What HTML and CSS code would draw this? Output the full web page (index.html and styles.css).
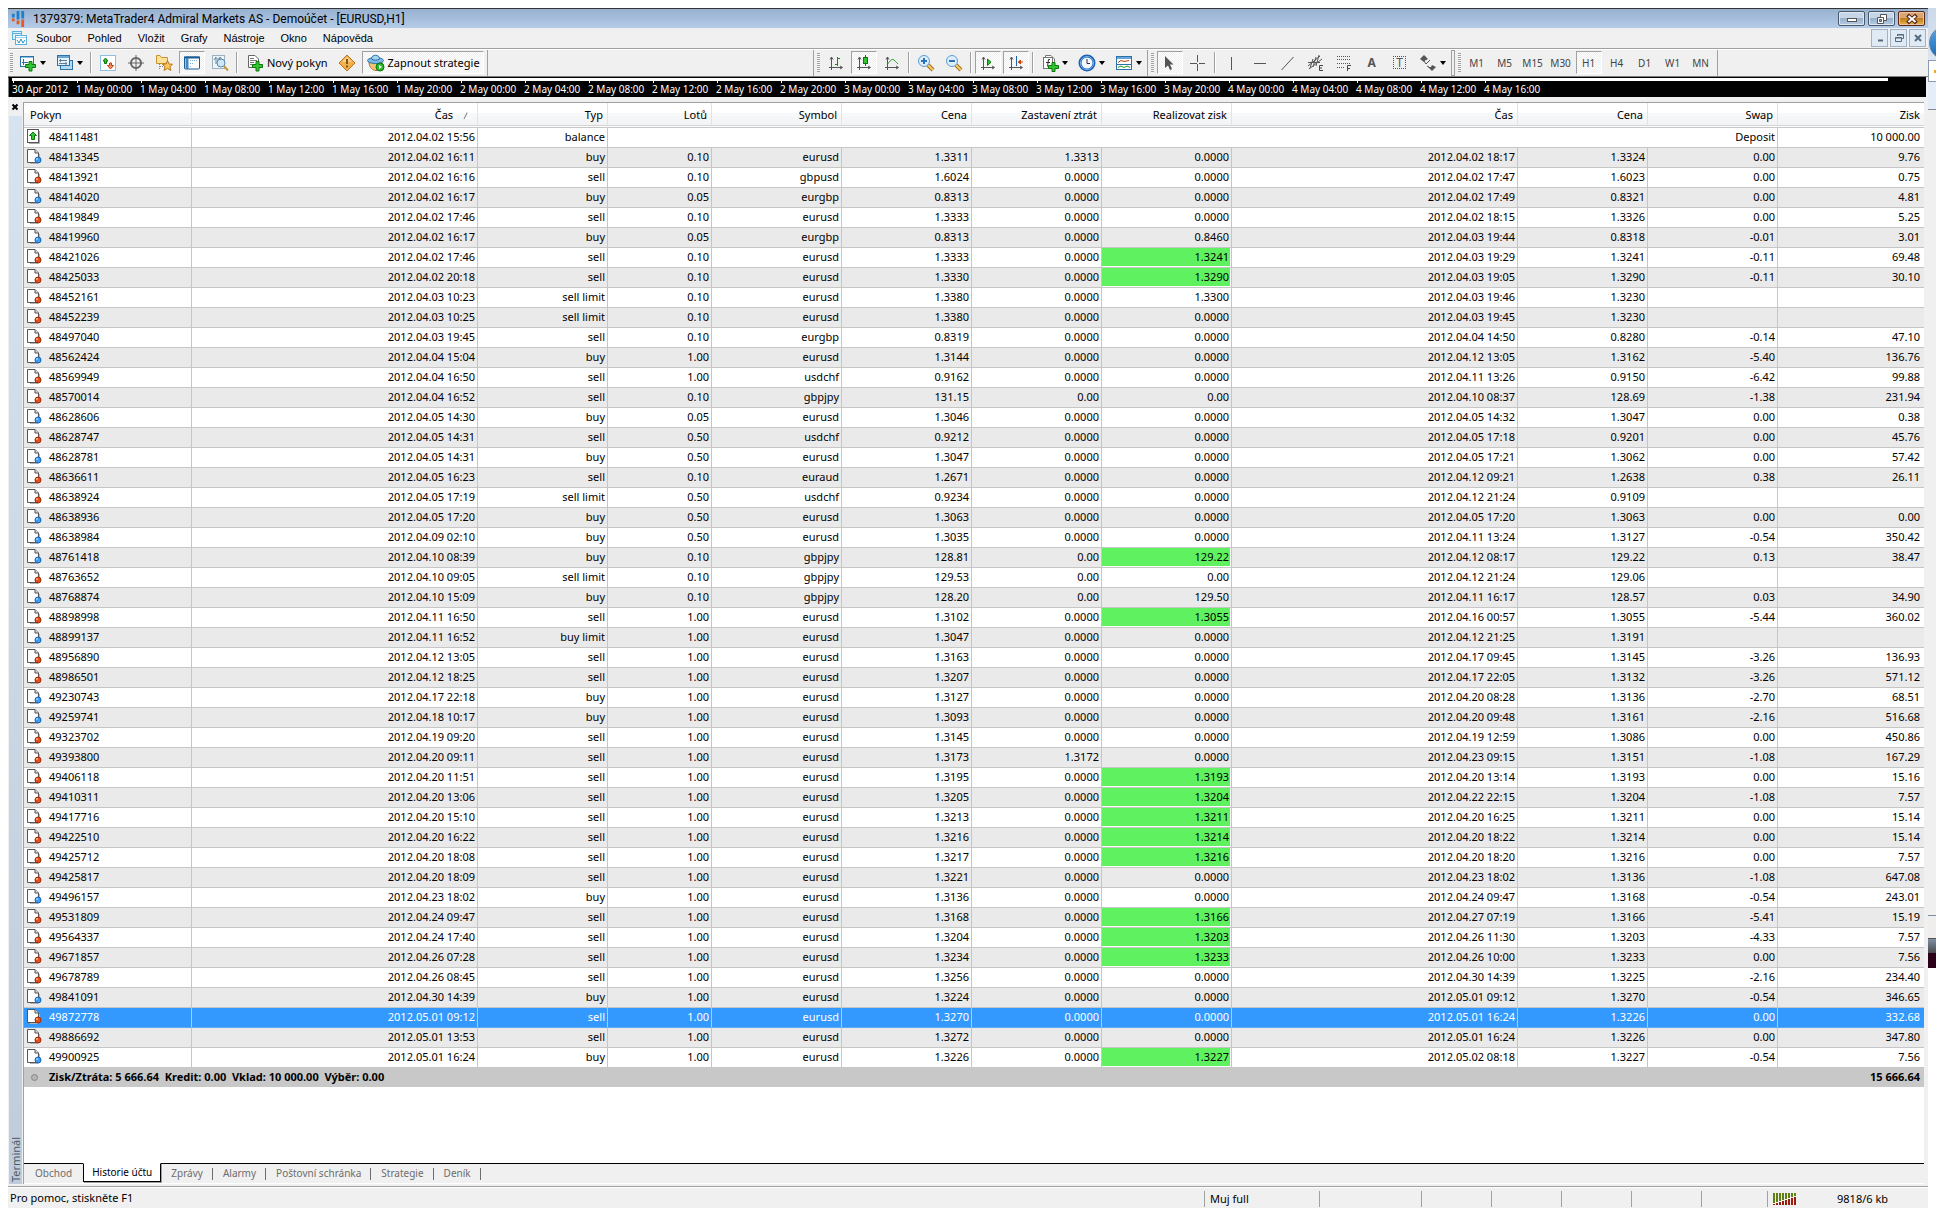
FILE: index.html
```html
<!DOCTYPE html>
<html lang="cs">
<head>
  <meta charset="UTF-8">
  <meta name="viewport" content="width=device-width, initial-scale=1.0">
  <title>1379379: MetaTrader4 Admiral Markets AS - Demoúčet - [EURUSD,H1]</title>
  <link rel="stylesheet" href="styles.css">
</head>
<body>

<!-- Order icons used by the history rows -->
<svg class="defs" width="0" height="0" aria-hidden="true">
  <symbol id="doc" viewBox="0 0 15 15">
    <path d="M12.500 5V13M3 14.500H11" stroke="#b4b4b4" fill="none"/>
    <path d="M.5 .5H8L11.500 4V13.500H.5Z" fill="#fff" stroke="#555"/>
    <path d="M8 .5V4H11.500" fill="#ddd" stroke="#555"/>
  </symbol>
  <symbol id="buy" viewBox="0 0 15 15">
    <use href="#doc"/>
    <circle cx="11" cy="11" r="3" fill="#3f9bf2" stroke="#1764ad"/>
    <circle cx="10" cy="10" r="1" fill="#a5d4ff"/>
  </symbol>
  <symbol id="sell" viewBox="0 0 15 15">
    <use href="#doc"/>
    <circle cx="11" cy="11" r="3" fill="#e2501c" stroke="#9c2c06"/>
    <circle cx="10" cy="10" r="1" fill="#ffb294"/>
  </symbol>
  <symbol id="balance" viewBox="0 0 15 15">
    <path d="M12.500 2V14.500H2" stroke="#aaa" fill="none"/>
    <rect x=".5" y=".5" width="11" height="13" fill="#fff" stroke="#555"/>
    <path d="M6 3L9.500 6.500H7.500V10.500H4.500V6.500H2.500Z" fill="#35c435" stroke="#0b7a0b"/>
  </symbol>
  <symbol id="axes" viewBox="0 0 16 16">
    <path d="M3.500 2V15M1 12.500H14M2 4.500L3.500 2L5 4.500M12 11L14.500 12.500L12 14" stroke="#555" fill="none"/>
  </symbol>
</svg>

<div class="screen">
  <div class="window">

    <header class="titlebar">
      <svg class="logo" viewBox="0 0 14 18">
        <path d="M2 4V8M7 1V10M12 1V9" stroke="#1f7fc9" stroke-width="3"/>
        <path d="M2 9V12M7 11V15M12 10V18" stroke="#e2592b" stroke-width="3"/>
      </svg>
      <h1>1379379: MetaTrader4 Admiral Markets AS - Demoúčet - [EURUSD,H1]</h1>
      <div class="caption-buttons">
        <button type="button" class="caption" aria-label="Minimalizovat"><svg viewBox="0 0 12 12"><rect x="1.500" y="5.500" width="9" height="3" fill="#fff" stroke="#555"/></svg></button>
        <button type="button" class="caption" aria-label="Obnovit"><svg viewBox="0 0 12 12"><path d="M4.500 1.500H10.500V7.500H4.500Z" fill="#fff" stroke="#555"/><path d="M1.500 4.500H7.500V10.500H1.500Z" fill="#fff" stroke="#555"/><path d="M3.500 6.500H5.500V8.500H3.500Z" fill="#98b1cb" stroke="#555"/></svg></button>
        <button type="button" class="caption caption-close" aria-label="Zavřít"><svg viewBox="0 0 12 12"><path d="M1.500 2L10.500 10M10.500 2L1.500 10" stroke="#5a2a1a" stroke-width="4"/><path d="M2.500 3L9.500 9M9.500 3L2.500 9" stroke="#fff" stroke-width="2"/></svg></button>
      </div>
    </header>

    <nav class="menubar">
      <svg class="menu-icon" viewBox="0 0 15 15">
        <rect x=".5" y=".5" width="9" height="8" fill="#dff1fb" stroke="#5cb0dc"/><path d="M0 2.500H10" stroke="#5cb0dc"/>
        <rect x="3.500" y="4.500" width="11" height="9" fill="#fff" stroke="#5cb0dc"/><path d="M4 6.500H14" stroke="#9fd3ee"/>
        <path d="M5 9L7 12L9 8L11 12L13 9" stroke="#2f8fc4" fill="none"/>
      </svg>
      <button type="button">Soubor</button>
      <button type="button">Pohled</button>
      <button type="button">Vložit</button>
      <button type="button">Grafy</button>
      <button type="button">Nástroje</button>
      <button type="button">Okno</button>
      <button type="button">Nápověda</button>
      <div class="mdi-buttons">
        <button type="button" class="mdi" aria-label="Minimalizovat graf"><svg viewBox="0 0 12 12"><path d="M4 8.500H9" stroke="#566b80" stroke-width="2"/></svg></button>
        <button type="button" class="mdi" aria-label="Obnovit graf"><svg viewBox="0 0 12 12"><path d="M4.500 4V2.500H10.500V6.500H9M2.500 5.500H8.500V9.500H2.500ZM4 3H11M2 6H9" stroke="#566b80" fill="none"/></svg></button>
        <button type="button" class="mdi" aria-label="Zavřít graf"><svg viewBox="0 0 12 12"><path d="M3 3L9 9M9 3L3 9" stroke="#566b80" stroke-width="2"/></svg></button>
      </div>
    </nav>

    <div class="toolbar">
      <div class="band">
        <span class="grip"></span>
        <button type="button" class="tool tool-drop" aria-label="Nový graf">
          <svg viewBox="0 0 18 18"><rect x="1.500" y="2.500" width="13" height="10" fill="#fff" stroke="#2b72a8"/><path d="M2 3.500H14" stroke="#8bbce0"/><path d="M3 8.500H9M4.500 5V11" stroke="#2b72a8"/><path d="M10 7.500H13V10.500H16.500V13.500H13V17H10V13.500H6.500V10.500H10Z" fill="#35c435" stroke="#087a08"/></svg>
          <i class="caret"></i></button>
        <button type="button" class="tool tool-drop" aria-label="Profily">
          <svg viewBox="0 0 18 18"><rect x="4.500" y="6.500" width="12" height="9" fill="#b8d9f2" stroke="#2b72a8"/><rect x="1.500" y="1.500" width="12" height="10" fill="#e6f3fc" stroke="#2b72a8"/><path d="M2 3H13" stroke="#6aa7d6" stroke-width="2"/><path d="M3 6.500H11M3 9.500H11M4.500 5V8M10 8V11" stroke="#5a7c95"/></svg>
          <i class="caret"></i></button>
        <span class="sep"></span>
        <button type="button" class="tool" aria-label="Tržní hodnoty"><svg viewBox="0 0 18 18"><rect x="1.500" y="1.500" width="15" height="15" fill="#fff" stroke="#8fbfe0"/><path d="M4 7L6.500 4L9 7H7.500V9.500H5.500V7Z" fill="#35c435" stroke="#087a08"/><path d="M8.500 11.500L11.500 15L14.500 11.500H12.500V9H10.500V11.500Z" fill="#f5906a" stroke="#c0400f"/></svg></button>
        <button type="button" class="tool" aria-label="Okno dat"><svg viewBox="0 0 18 18"><circle cx="9" cy="9" r="5" fill="none" stroke="#666" stroke-width="2"/><path d="M9 1V17M1 9H17" stroke="#666"/></svg></button>
        <button type="button" class="tool" aria-label="Navigátor"><svg viewBox="0 0 18 18"><path d="M1.500 9.500V1.500H5L6.500 3.500H12.500V9.500Z" fill="#fbe19a" stroke="#c8922a"/><path d="M4.500 10V16M5 12.500H9" stroke="#888" stroke-dasharray="1 1"/><path d="M12.500 6.500L14 10L17.500 10.300L15 12.700L15.800 16.500L12.500 14.500L9 16.500L9.900 12.700L7.300 10.300L11 10Z" fill="#f8c45c" stroke="#b8791e"/></svg></button>
        <button type="button" class="tool pressed" aria-label="Terminál"><svg viewBox="0 0 18 18"><rect x="1.500" y="3" width="15" height="12" rx="1" fill="#fff" stroke="#1d5c94"/><path d="M1 3.500H17" stroke="#1d5c94" stroke-width="2"/><path d="M4 4V15" stroke="#3f86c2" stroke-width="3"/><path d="M7 6.500H15M7 9.500H10M7 12.500H9" stroke="#7fb4dd" stroke-dasharray="1 1"/></svg></button>
        <button type="button" class="tool" aria-label="Tester strategií"><svg viewBox="0 0 18 18"><rect x="1.500" y="1.500" width="12" height="13" fill="#eef5fa" stroke="#9bb0c0"/><path d="M3 6L5 3V10M7 4V9L9 3L11 6" stroke="#62829b" fill="none"/><circle cx="10" cy="9" r="4" fill="#cfe6f7" stroke="#5488ae"/><path d="M13 12L17 16.500" stroke="#c89a3c" stroke-width="2"/></svg></button>
        <span class="sep"></span>
        <button type="button" class="tool tool-text"><svg viewBox="0 0 18 18"><path d="M2.500 1.500H9L12.500 5V13.500H2.500Z" fill="#fff" stroke="#666"/><path d="M4 4.500H8M4 6.500H11M4 8.500H8M4 10.500H7" stroke="#777"/><path d="M10 7.500H13V10.500H16.500V13.500H13V17H10V13.500H6.500V10.500H10Z" fill="#35c435" stroke="#087a08"/></svg>Nový pokyn</button>
        <button type="button" class="tool" aria-label="MetaEditor"><svg viewBox="0 0 18 18"><path d="M9 1L17 9L9 17L1 9Z" fill="#f0b04c" stroke="#b4751c"/><path d="M9 3L14 8H4Z" fill="#fad08a"/><path d="M9 5V10M9 11.500V13.500" stroke="#8a5208" stroke-width="2"/></svg></button>
        <button type="button" class="tool tool-text pressed"><svg viewBox="0 0 18 18"><path d="M2 8C2 14 6 16.500 9 16.500C12 16.500 15 14 15 8Z" fill="#f3c27a" stroke="#b07a30"/><ellipse cx="8.500" cy="6.500" rx="8" ry="3" fill="#7db9e6" stroke="#2b72a8"/><path d="M4.500 5C4.500 0 12.500 0 12.500 5C11 6.500 6 6.500 4.500 5Z" fill="#a9d3f2" stroke="#2b72a8"/><circle cx="13" cy="13" r="4" fill="#2fb52f" stroke="#087a08"/><path d="M12 11L15 13L12 15Z" fill="#fff"/></svg>Zapnout strategie</button>
      </div>

      <div class="band band-chart">
        <span class="grip"></span>
        <button type="button" class="tool" aria-label="Sloupcový graf"><svg viewBox="0 0 16 16"><use href="#axes"/><path d="M9.500 2V11M9 3.500H12M7 9.500H10" stroke="#1b8a1b"/></svg></button>
        <button type="button" class="tool pressed" aria-label="Svíčkový graf"><svg viewBox="0 0 16 16"><use href="#axes"/><path d="M9.500 0V11" stroke="#087a08"/><rect x="7.500" y="2.500" width="4" height="6" fill="#35c435" stroke="#087a08"/></svg></button>
        <button type="button" class="tool" aria-label="Čárový graf"><svg viewBox="0 0 16 16"><use href="#axes"/><path d="M3 10C5 7 8 3 10 5S13 8 14 9" stroke="#1b9a1b" fill="none"/></svg></button>
        <span class="sep"></span>
        <button type="button" class="tool" aria-label="Přiblížit"><svg viewBox="0 0 18 18"><path d="M11 11L16 16" stroke="#a8721e" stroke-width="4"/><path d="M11 11L16 16" stroke="#f2cc68" stroke-width="2"/><circle cx="7" cy="7" r="5.500" fill="#dcedfb" stroke="#5c9bd2"/><path d="M4 7H10M7 4V10" stroke="#2f72b8" stroke-width="2"/></svg></button>
        <button type="button" class="tool" aria-label="Oddálit"><svg viewBox="0 0 18 18"><path d="M11 11L16 16" stroke="#a8721e" stroke-width="4"/><path d="M11 11L16 16" stroke="#f2cc68" stroke-width="2"/><circle cx="7" cy="7" r="5.500" fill="#dcedfb" stroke="#5c9bd2"/><path d="M4 7H10" stroke="#2f72b8" stroke-width="2"/></svg></button>
        <span class="sep"></span>
        <button type="button" class="tool pressed" aria-label="Automatický posun"><svg viewBox="0 0 16 16"><use href="#axes"/><path d="M7.500 4V10.500L11 7.200Z" fill="#35c435" stroke="#087a08"/></svg></button>
        <button type="button" class="tool pressed" aria-label="Posun grafu"><svg viewBox="0 0 16 16"><use href="#axes"/><path d="M8.500 1V11" stroke="#1d5fa8"/><path d="M10 7H15M12.500 5L10.500 7L12.500 9Z" fill="#c2410c" stroke="#c2410c"/></svg></button>
        <span class="sep"></span>
        <button type="button" class="tool tool-drop" aria-label="Indikátory"><svg viewBox="0 0 18 18"><path d="M4.500 4.500V1.500H10L13.500 5V13.500H10" fill="#fff" stroke="#777"/><rect x="2.500" y="3.500" width="9" height="11" fill="#fff" stroke="#777"/><path d="M9 5.500H7.500L6.500 12.500M5 8.500H9" stroke="#333" fill="none"/><path d="M11 8.500H14V11.500H17.500V14.500H14V17.500H11V14.500H7.500V11.500H11Z" fill="#35c435" stroke="#087a08"/></svg><i class="caret"></i></button>
        <button type="button" class="tool tool-drop" aria-label="Časové rámce"><svg viewBox="0 0 18 18"><circle cx="9" cy="9" r="7" fill="#f3f9ff" stroke="#1e62b4" stroke-width="3"/><circle cx="9" cy="9" r="6.500" fill="none" stroke="#7fb8ee"/><path d="M9 5V9.500H12" stroke="#333" fill="none"/></svg><i class="caret"></i></button>
        <button type="button" class="tool tool-drop" aria-label="Šablony"><svg viewBox="0 0 18 18"><rect x="1.500" y="2.500" width="15" height="13" fill="#fff" stroke="#2b72a8"/><path d="M2 4H16" stroke="#6aa7d6" stroke-width="2"/><path d="M2 10.500H16" stroke="#2b72a8"/><path d="M3 8.500L6 6.500L9 7.500L14 6.500" stroke="#b6431a" fill="none"/><path d="M3 13.500L6 12L9 13.500L12 12L15 13.500" stroke="#1b9a1b" fill="none"/></svg><i class="caret"></i></button>
      </div>

      <div class="band">
        <span class="grip"></span>
        <button type="button" class="tool pressed" aria-label="Kurzor"><svg viewBox="0 0 16 16"><path d="M3 1V13L6 10.500L8 15L10 14L8 9.500H11.500Z" fill="#555"/></svg></button>
        <button type="button" class="tool" aria-label="Nitkový kříž"><svg viewBox="0 0 16 16"><path d="M7.500 0V7M7.500 9V16M0 8.500H7M9 8.500H15" stroke="#555"/></svg></button>
        <span class="sep"></span>
        <button type="button" class="tool" aria-label="Svislá čára"><svg viewBox="0 0 16 16"><path d="M7.500 2V15" stroke="#555"/></svg></button>
        <button type="button" class="tool" aria-label="Vodorovná čára"><svg viewBox="0 0 16 16"><path d="M2 8.500H14" stroke="#555"/></svg></button>
        <button type="button" class="tool" aria-label="Trendová čára"><svg viewBox="0 0 16 16"><path d="M1.500 15L13.500 2" stroke="#555"/></svg></button>
        <button type="button" class="tool" aria-label="Rovnoměrný kanál"><svg viewBox="0 0 18 18"><path d="M1 12L13 2M2 15L15 5M3 14L6 5M6 13L9 3M9 12L12 1M1 8.500H13" stroke="#555"/><path d="M16 11.500H12.500V16.500H16M12 14H15" stroke="#444" fill="none"/></svg></button>
        <button type="button" class="tool" aria-label="Fibonacciho návrat"><svg viewBox="0 0 18 18"><path d="M2 2.500H16M2 5.500H16M2 9.500H16M2 13.500H10" stroke="#555" stroke-dasharray="1 1"/><path d="M16 11.500H12.500V17M12 14.500H15" stroke="#444" fill="none"/></svg></button>
        <button type="button" class="tool tool-letter">A</button>
        <button type="button" class="tool tool-letter"><span class="label-box">T</span></button>
        <button type="button" class="tool tool-drop" aria-label="Šipky"><svg viewBox="0 0 18 18"><path d="M5 1L9 5L6 6.500L5 8L1 5ZM13 17L9 13H12L13 11L17 13Z" fill="#555"/><path d="M5 7L7 10L11 6M8 12L10 13" stroke="#555" fill="none"/></svg><i class="caret"></i></button>
      </div>

      <div class="band band-periods">
        <span class="grip"></span>
        <button type="button" class="tool period">M1</button>
        <button type="button" class="tool period">M5</button>
        <button type="button" class="tool period">M15</button>
        <button type="button" class="tool period">M30</button>
        <button type="button" class="tool period pressed">H1</button>
        <button type="button" class="tool period">H4</button>
        <button type="button" class="tool period">D1</button>
        <button type="button" class="tool period">W1</button>
        <button type="button" class="tool period">MN</button>
      </div>
    </div>

    <!-- Visible strip of the chart with its time axis -->
    <div class="chart">
      <div class="chart-edge"></div>
      <ol class="time-axis" id="time-axis"></ol>
    </div>

    <div class="terminal">
      <div class="terminal-side">
        <button type="button" class="terminal-close" aria-label="Zavřít terminál"><svg viewBox="0 0 8 8"><path d="M1.500 1.500L6.500 6.500M6.500 1.500L1.500 6.500" stroke="#000" stroke-width="2"/></svg></button>
        <span class="terminal-title">Terminál</span>
      </div>
      <div class="terminal-main">
        <div class="history-wrap">
          <table class="history">
            <colgroup>
              <col class="c-order"><col class="c-time"><col class="c-std"><col class="c-lots">
              <col class="c-std"><col class="c-std"><col class="c-std"><col class="c-std">
              <col class="c-time"><col class="c-std"><col class="c-std"><col class="c-profit">
            </colgroup>
            <thead>
              <tr>
                <th>Pokyn</th>
                <th>Čas <svg class="sort" viewBox="0 0 10 8"><path d="M1 8L4.500 1" stroke="#777"/><path d="M4.500 1L8 7.500H2" stroke="#fff" fill="none"/></svg></th>
                <th>Typ</th><th>Lotů</th><th>Symbol</th><th>Cena</th><th>Zastavení ztrát</th>
                <th>Realizovat zisk</th><th>Čas</th><th>Cena</th><th>Swap</th><th>Zisk</th>
              </tr>
            </thead>
            <tbody id="history-rows"></tbody>
            <tfoot>
              <tr>
                <td colspan="11"><span class="total-dot"></span>Zisk/Ztráta: 5 666.64&nbsp; Kredit: 0.00&nbsp; Vklad: 10 000.00&nbsp; Výběr: 0.00</td>
                <td>15 666.64</td>
              </tr>
            </tfoot>
          </table>
        </div>
        <div class="tabs">
          <button type="button" class="tab">Obchod</button>
          <button type="button" class="tab active">Historie účtu</button>
          <button type="button" class="tab">Zprávy</button>
          <button type="button" class="tab">Alarmy</button>
          <button type="button" class="tab">Poštovní schránka</button>
          <button type="button" class="tab">Strategie</button>
          <button type="button" class="tab">Deník</button>
        </div>
      </div>
    </div>

    <footer class="statusbar">
      <span class="status-help">Pro pomoc, stiskněte F1</span>
      <span class="status-cell w-profile">Muj full</span>
      <span class="status-cell w-date"></span>
      <span class="status-cell"></span>
      <span class="status-cell"></span>
      <span class="status-cell"></span>
      <span class="status-cell"></span>
      <span class="status-cell w-volume"></span>
      <span class="status-cell w-traffic">
        <svg viewBox="0 0 24 12">
          <path d="M1 0V10M4 0V9M7 0V8M10 0V7M13 0V6M16 0V5M19 0V4M22 0V3" stroke="#5f8010" stroke-width="2"/>
          <path d="M1 11V12M4 10V12M7 9V12M10 8V12M13 7V12M16 6V12M19 5V12M22 4V12" stroke="#9c1c0c" stroke-width="2"/>
        </svg>
        9818/6 kb
      </span>
    </footer>
  </div>

  <!-- Edge of the window behind -->
  <div class="behind">
    <div class="behind-top"><span class="behind-orb"></span></div>
    <div class="behind-box"></div>
    <div class="behind-bar"></div>
    <div class="behind-page"></div>
    <div class="behind-foot"></div>
    <div class="behind-task"></div>
    <div class="behind-dark"></div>
  </div>
</div>

<script src="script.js"></script>
</body>
</html>
```

FILE: styles.css
```css
* {
  box-sizing: border-box;
}
body {
  margin: 0;
  background: #fff;
  color: #000;
  font-family: "Noto Sans", "Open Sans", sans-serif;
  font-size: 11px;
}
button {
  margin: 0;
  padding: 0;
  border: none;
  background: none;
  color: inherit;
  font: inherit;
}
svg {
  display: block;
  flex: none;
}
.defs {
  position: absolute;
}
.screen {
  display: flex;
  height: 100vh;
  padding: 8px 0 8px 8px;
}
.window {
  flex: 1;
  display: flex;
  flex-direction: column;
  min-width: 0;
  background: #f0f0f0;
}

/* Title bar */
.titlebar {
  display: flex;
  align-items: center;
  height: 20px;
  padding: 0 3px;
  border-top: 1px solid #333;
  background: linear-gradient(#97b1cf, #b5cce8);
}
.logo {
  width: 14px;
  height: 17px;
}
.titlebar h1 {
  flex: 1;
  margin: 0 0 0 8px;
  font-family: Roboto, "Liberation Sans", sans-serif;
  font-size: 12px;
  font-weight: normal;
  line-height: 18px;
}
.caption-buttons {
  display: flex;
  gap: 3px;
}
.caption {
  display: flex;
  align-items: center;
  justify-content: center;
  width: 27px;
  height: 15px;
  border: 1px solid #47586b;
  border-radius: 2px;
  background: linear-gradient(#c7d6e6 50%, #98b1cb 50%, #b4cbe2);
  box-shadow: inset 0 0 0 1px #dde8f3;
}
.caption svg {
  width: 12px;
  height: 12px;
}
.caption-close {
  border-color: #5c2414;
  background: linear-gradient(#dba578 50%, #bd7c1c 50%, #e6b450);
  box-shadow: inset 0 0 0 1px #e9c9a4;
}

/* Menu */
.menubar {
  display: flex;
  align-items: center;
  height: 20px;
  padding: 0 2px 0 4px;
  font-family: "Liberation Sans", Arial, sans-serif;
}
.menu-icon {
  width: 15px;
  height: 15px;
  margin-right: 1px;
}
.menubar > button {
  padding: 0 8px;
}
.mdi-buttons {
  display: flex;
  gap: 2px;
  margin-left: auto;
}
.mdi {
  display: flex;
  align-items: center;
  justify-content: center;
  width: 17px;
  height: 18px;
  border: 1px solid #9fb2c6;
  background: #dfeaf5;
}
.mdi svg {
  width: 12px;
  height: 12px;
}

/* Toolbars */
.toolbar {
  display: flex;
  height: 29px;
  border-top: 1px solid #a0a0a0;
  border-bottom: 1px solid #808080;
  box-shadow: inset 0 1px 0 #fff;
}
.band {
  display: flex;
  align-items: flex-start;
  height: 26px;
  margin-top: 1px;
  padding-top: 1px;
  border-left: 1px solid #a0a0a0;
}
.band:first-child {
  padding-right: 2px;
  border-left: none;
  border-right: 1px solid #a0a0a0;
}
.band-chart {
  margin-left: 325px;
}
.band-periods {
  margin-left: 3px;
  padding-right: 2px;
  border-right: 1px solid #a0a0a0;
  box-shadow: -3px 0 0 -1px #f0f0f0, -3px 0 0 #a0a0a0;
}
.grip {
  width: 3px;
  height: 19px;
  margin: 2px 2px 0 3px;
  background: repeating-linear-gradient(#a0a0a0 0 1px, #f8f8f8 1px 2px);
}
.band:first-child .grip {
  margin: 2px 1px 0 2px;
}
.sep {
  width: 2px;
  height: 21px;
  margin: 1px 2px 0;
  border-left: 1px solid #a0a0a0;
  border-right: 1px solid #fff;
}
.tool {
  display: flex;
  align-items: center;
  justify-content: center;
  width: 26px;
  height: 23px;
  margin: 0 1px;
  border: 1px solid transparent;
}
.tool svg {
  width: 18px;
  height: 18px;
}
.tool svg[viewBox="0 0 16 16"] {
  width: 16px;
  height: 16px;
}
.tool-drop {
  justify-content: flex-start;
  gap: 3px;
  width: 35px;
  padding-left: 3px;
}
.tool-text {
  gap: 3px;
  width: auto;
  padding: 0 3px 0 4px;
  white-space: nowrap;
}
.tool-text,
.tool-letter,
.period {
  line-height: 20px;
}
.pressed {
  border-color: #a0a0a0 #fff #fff #a0a0a0;
  background: repeating-conic-gradient(#fff 0 25%, #efefef 0 50%) 0 0 / 2px 2px;
}
.caret {
  border: 3px solid transparent;
  border-top: 4px solid #000;
  border-bottom: none;
}
.tool-letter {
  color: #555;
  font-weight: bold;
  font-size: 12px;
}
.label-box {
  width: 13px;
  height: 13px;
  border: 1px dotted #555;
  font-weight: normal;
  line-height: 11px;
}
.period {
  color: #444;
  font-size: 10px;
}

/* Chart strip */
.chart {
  height: 20px;
  margin-right: 2px;
  border-left: 1px solid #808080;
  border-top: 1px solid #000;
  background: #000;
  color: #fff;
}
.chart-edge {
  height: 3px;
  margin: 0 38px 0 3px;
  background: #fff;
}
.time-axis {
  display: flex;
  margin: 0;
  padding: 0 0 0 3px;
  list-style: none;
  font-size: 10px;
  line-height: 16px;
}
.time-axis li {
  width: 64px;
  white-space: nowrap;
  background: linear-gradient(#fff, #fff) 1px 0 / 1px 2px no-repeat;
}

/* Terminal */
.terminal {
  flex: 1;
  display: flex;
  min-height: 0;
  margin: 5px 4px 2px 0;
}
.terminal-side {
  display: flex;
  flex-direction: column;
  width: 15px;
}
.terminal-close {
  display: flex;
  height: 14px;
  padding: 1px 0 0 3px;
}
.terminal-close svg {
  width: 8px;
  height: 8px;
}
.terminal-title {
  flex: 1;
  width: 13px;
  padding-top: 2px;
  margin-left: 1px;
  background: linear-gradient(#bfccdb, #d6e4f1);
  color: #4c5a68;
  line-height: 13px;
  writing-mode: vertical-rl;
  transform: rotate(180deg);
}
.terminal-main {
  flex: 1;
  display: flex;
  flex-direction: column;
  min-width: 0;
  border-top: 1px solid #a0a0a0;
  border-left: 1px solid #a0a0a0;
}
.history-wrap {
  flex: 1;
  overflow: hidden;
  border-bottom: 1px solid #000;
  background: #fff;
}
.history {
  width: 100%;
  table-layout: fixed;
  border-collapse: separate;
  border-spacing: 0;
}
.c-order {
  width: 168px;
}
.c-time {
  width: 286px;
}
.c-std {
  width: 130px;
}
.c-lots {
  width: 104px;
}
.c-profit {
  width: 146px;
}
.history th {
  height: 25px;
  padding: 0 4px;
  border-right: 1px solid #e2e3e4;
  border-bottom: 1px solid #c6c6c6;
  background: linear-gradient(#fff 40%, #f7f8fa 41%, #f1f2f4);
  box-shadow: inset 0 -1px 0 #fff, inset 0 -2px 0 #d5d5d5;
  font-weight: normal;
  line-height: 20px;
  text-align: right;
}
.history th:first-child {
  padding-left: 6px;
  text-align: left;
}
.sort {
  display: inline-block;
  width: 10px;
  height: 8px;
  margin: 0 0 0 7px;
}
.history td {
  height: 20px;
  padding: 0 2px 2px;
  border-right: 1px solid #c6c6c6;
  border-bottom: 1px solid #c6c6c6;
  line-height: 17px;
  text-align: right;
  white-space: nowrap;
}
.history td:first-child {
  padding-left: 3px;
  text-align: left;
}
.history th:last-child,
.history td:last-child {
  padding-right: 4px;
  border-right: none;
}
.history tbody tr:nth-child(even) {
  background: #eaeaea;
}
.order {
  display: flex;
  align-items: center;
  gap: 7px;
}
.order svg {
  width: 15px;
  height: 15px;
}
.history .hit {
  background: #5ff15f;
  box-shadow: inset -1px -1px 0 #fff;
}
.history tbody tr.selected {
  background: #3399ff;
  color: #fff;
}
.selected td {
  border-bottom-color: #5ea9f5;
}
.history tfoot td {
  height: 19px;
  border: none;
  background: #c8c8c8;
  font-weight: bold;
}
.total-dot {
  display: inline-block;
  width: 7px;
  height: 7px;
  margin: 0 11px 0 4px;
  border: 1px solid #888;
  border-radius: 50%;
  background: #b4b4b4;
}

/* Terminal tabs */
.tabs {
  display: flex;
  height: 20px;
  border-bottom: 1px solid #fff;
  font-size: 10px;
}
.tab {
  height: 18px;
  padding: 0 10px;
  background: linear-gradient(#6d6d6d, #6d6d6d) 100% 4px / 1px 12px no-repeat;
  color: #6d6d6d;
  line-height: 18px;
}
.tab:first-child {
  padding: 0 11px;
  background: none;
}
.tab.active {
  height: 19px;
  margin-top: -1px;
  padding: 0 8px;
  border: 1px solid #000;
  border-top-color: #fff;
  background: #fff;
  box-shadow: 1px 1px 0 #a0a0a0;
  color: #000;
  line-height: 17px;
}

/* Status bar */
.statusbar {
  display: flex;
  align-items: stretch;
  height: 22px;
  border-top: 1px solid #a0a0a0;
  box-shadow: inset 0 1px 0 #fff;
  line-height: 22px;
}
.status-help {
  flex: 1;
  padding-left: 2px;
}
.status-cell {
  width: 70px;
  margin: 4px 0 1px;
  padding-left: 5px;
  border-left: 1px solid #a0a0a0;
  line-height: 16px;
}
.w-profile {
  width: 115px;
}
.w-date {
  width: 102px;
}
.w-volume {
  width: 66px;
}
.w-traffic {
  display: flex;
  align-items: center;
  gap: 40px;
  width: 161px;
}
.w-traffic svg {
  width: 24px;
  height: 12px;
}

/* Window behind */
.behind {
  display: flex;
  flex-direction: column;
  width: 8px;
  overflow: hidden;
}
.behind-top {
  position: relative;
  height: 52px;
  overflow: hidden;
  background: linear-gradient(#ccd9e8, #dbe6f2);
}
.behind-orb {
  position: absolute;
  top: 18px;
  left: 1px;
  width: 34px;
  height: 34px;
  border: 1px solid #6f8398;
  border-radius: 50%;
  background: linear-gradient(#5aa6e6, #1668b8);
}
.behind-box {
  height: 22px;
  border: 1px solid #8a9bb0;
  border-right: none;
  background: linear-gradient(#f5a623, #f5a623) 5px 9px / 3px 3px no-repeat #fff;
}
.behind-bar {
  height: 28px;
  border-bottom: 1px solid #7f8a98;
  background: #e4edf8;
}
.behind-page {
  height: 805px;
  background: #f0f0f0;
}
.behind-foot {
  height: 24px;
  border-top: 1px solid #7d8fa3;
  border-bottom: 1px solid #555;
  background: #f0eded;
}
.behind-task {
  height: 14px;
  background: linear-gradient(#7f8fa5, #4a4a4a);
}
.behind-dark {
  height: 15px;
  background: #2a0018;
}
```

FILE: script.js
```js
// order|open time|type|lots|symbol|price|S/L|T/P|close time|price|swap|profit
// T/P ending with * was hit, order starting with > is selected
const orders = `
48413345|2012.04.02 16:11|buy|0.10|eurusd|1.3311|1.3313|0.0000|2012.04.02 18:17|1.3324|0.00|9.76
48413921|2012.04.02 16:16|sell|0.10|gbpusd|1.6024|0.0000|0.0000|2012.04.02 17:47|1.6023|0.00|0.75
48414020|2012.04.02 16:17|buy|0.05|eurgbp|0.8313|0.0000|0.0000|2012.04.02 17:49|0.8321|0.00|4.81
48419849|2012.04.02 17:46|sell|0.10|eurusd|1.3333|0.0000|0.0000|2012.04.02 18:15|1.3326|0.00|5.25
48419960|2012.04.02 16:17|buy|0.05|eurgbp|0.8313|0.0000|0.8460|2012.04.03 19:44|0.8318|-0.01|3.01
48421026|2012.04.02 17:46|sell|0.10|eurusd|1.3333|0.0000|1.3241*|2012.04.03 19:29|1.3241|-0.11|69.48
48425033|2012.04.02 20:18|sell|0.10|eurusd|1.3330|0.0000|1.3290*|2012.04.03 19:05|1.3290|-0.11|30.10
48452161|2012.04.03 10:23|sell limit|0.10|eurusd|1.3380|0.0000|1.3300|2012.04.03 19:46|1.3230||
48452239|2012.04.03 10:25|sell limit|0.10|eurusd|1.3380|0.0000|0.0000|2012.04.03 19:45|1.3230||
48497040|2012.04.03 19:45|sell|0.10|eurgbp|0.8319|0.0000|0.0000|2012.04.04 14:50|0.8280|-0.14|47.10
48562424|2012.04.04 15:04|buy|1.00|eurusd|1.3144|0.0000|0.0000|2012.04.12 13:05|1.3162|-5.40|136.76
48569949|2012.04.04 16:50|sell|1.00|usdchf|0.9162|0.0000|0.0000|2012.04.11 13:26|0.9150|-6.42|99.88
48570014|2012.04.04 16:52|sell|0.10|gbpjpy|131.15|0.00|0.00|2012.04.10 08:37|128.69|-1.38|231.94
48628606|2012.04.05 14:30|buy|0.05|eurusd|1.3046|0.0000|0.0000|2012.04.05 14:32|1.3047|0.00|0.38
48628747|2012.04.05 14:31|sell|0.50|usdchf|0.9212|0.0000|0.0000|2012.04.05 17:18|0.9201|0.00|45.76
48628781|2012.04.05 14:31|buy|0.50|eurusd|1.3047|0.0000|0.0000|2012.04.05 17:21|1.3062|0.00|57.42
48636611|2012.04.05 16:23|sell|0.10|euraud|1.2671|0.0000|0.0000|2012.04.12 09:21|1.2638|0.38|26.11
48638924|2012.04.05 17:19|sell limit|0.50|usdchf|0.9234|0.0000|0.0000|2012.04.12 21:24|0.9109||
48638936|2012.04.05 17:20|buy|0.50|eurusd|1.3063|0.0000|0.0000|2012.04.05 17:20|1.3063|0.00|0.00
48638984|2012.04.09 02:10|buy|0.50|eurusd|1.3035|0.0000|0.0000|2012.04.11 13:24|1.3127|-0.54|350.42
48761418|2012.04.10 08:39|buy|0.10|gbpjpy|128.81|0.00|129.22*|2012.04.12 08:17|129.22|0.13|38.47
48763652|2012.04.10 09:05|sell limit|0.10|gbpjpy|129.53|0.00|0.00|2012.04.12 21:24|129.06||
48768874|2012.04.10 15:09|buy|0.10|gbpjpy|128.20|0.00|129.50|2012.04.11 16:17|128.57|0.03|34.90
48898998|2012.04.11 16:50|sell|1.00|eurusd|1.3102|0.0000|1.3055*|2012.04.16 00:57|1.3055|-5.44|360.02
48899137|2012.04.11 16:52|buy limit|1.00|eurusd|1.3047|0.0000|0.0000|2012.04.12 21:25|1.3191||
48956890|2012.04.12 13:05|sell|1.00|eurusd|1.3163|0.0000|0.0000|2012.04.17 09:45|1.3145|-3.26|136.93
48986501|2012.04.12 18:25|sell|1.00|eurusd|1.3207|0.0000|0.0000|2012.04.17 22:05|1.3132|-3.26|571.12
49230743|2012.04.17 22:18|buy|1.00|eurusd|1.3127|0.0000|0.0000|2012.04.20 08:28|1.3136|-2.70|68.51
49259741|2012.04.18 10:17|buy|1.00|eurusd|1.3093|0.0000|0.0000|2012.04.20 09:48|1.3161|-2.16|516.68
49323702|2012.04.19 09:20|sell|1.00|eurusd|1.3145|0.0000|0.0000|2012.04.19 12:59|1.3086|0.00|450.86
49393800|2012.04.20 09:11|sell|1.00|eurusd|1.3173|1.3172|0.0000|2012.04.23 09:15|1.3151|-1.08|167.29
49406118|2012.04.20 11:51|sell|1.00|eurusd|1.3195|0.0000|1.3193*|2012.04.20 13:14|1.3193|0.00|15.16
49410311|2012.04.20 13:06|sell|1.00|eurusd|1.3205|0.0000|1.3204*|2012.04.22 22:15|1.3204|-1.08|7.57
49417716|2012.04.20 15:10|sell|1.00|eurusd|1.3213|0.0000|1.3211*|2012.04.20 16:25|1.3211|0.00|15.14
49422510|2012.04.20 16:22|sell|1.00|eurusd|1.3216|0.0000|1.3214*|2012.04.20 18:22|1.3214|0.00|15.14
49425712|2012.04.20 18:08|sell|1.00|eurusd|1.3217|0.0000|1.3216*|2012.04.20 18:20|1.3216|0.00|7.57
49425817|2012.04.20 18:09|sell|1.00|eurusd|1.3221|0.0000|0.0000|2012.04.23 18:02|1.3136|-1.08|647.08
49496157|2012.04.23 18:02|buy|1.00|eurusd|1.3136|0.0000|0.0000|2012.04.24 09:47|1.3168|-0.54|243.01
49531809|2012.04.24 09:47|sell|1.00|eurusd|1.3168|0.0000|1.3166*|2012.04.27 07:19|1.3166|-5.41|15.19
49564337|2012.04.24 17:40|sell|1.00|eurusd|1.3204|0.0000|1.3203*|2012.04.26 11:30|1.3203|-4.33|7.57
49671857|2012.04.26 07:28|sell|1.00|eurusd|1.3234|0.0000|1.3233*|2012.04.26 10:00|1.3233|0.00|7.56
49678789|2012.04.26 08:45|sell|1.00|eurusd|1.3256|0.0000|0.0000|2012.04.30 14:39|1.3225|-2.16|234.40
49841091|2012.04.30 14:39|buy|1.00|eurusd|1.3224|0.0000|0.0000|2012.05.01 09:12|1.3270|-0.54|346.65
>49872778|2012.05.01 09:12|sell|1.00|eurusd|1.3270|0.0000|0.0000|2012.05.01 16:24|1.3226|0.00|332.68
49886692|2012.05.01 13:53|sell|1.00|eurusd|1.3272|0.0000|0.0000|2012.05.01 16:24|1.3226|0.00|347.80
49900925|2012.05.01 16:24|buy|1.00|eurusd|1.3226|0.0000|1.3227*|2012.05.02 08:18|1.3227|-0.54|7.56
`.trim().split('\n');

function orderCell(icon, number) {
  return `<td><span class="order"><svg><use href="#${icon}"/></svg>${number}</span></td>`;
}

let html = `<tr>${orderCell('balance', '48411481')}<td>2012.04.02 15:56</td><td>balance</td>
  <td colspan="8">Deposit</td><td>10 000.00</td></tr>`;

orders.forEach(line => {
  const selected = line.startsWith('>');
  const cells = line.replace('>', '').split('|');
  const icon = cells[2].startsWith('buy') ? 'buy' : 'sell';
  html += `<tr${selected ? ' class="selected"' : ''}>` + orderCell(icon, cells[0]);
  cells.slice(1).forEach(value => {
    html += value.endsWith('*') ? `<td class="hit">${value.slice(0, -1)}</td>` : `<td>${value}</td>`;
  });
  html += '</tr>';
});
document.getElementById('history-rows').innerHTML = html;

// Time axis, one label every four hours
const labels = ['30 Apr 2012'];
for (let day = 1; day <= 4; day++) {
  for (let hour = 0; hour < 24; hour += 4) {
    labels.push(`${day} May ${String(hour).padStart(2, '0')}:00`);
  }
}
labels.pop();
document.getElementById('time-axis').innerHTML = labels.map(text => `<li>${text}</li>`).join('');
```
